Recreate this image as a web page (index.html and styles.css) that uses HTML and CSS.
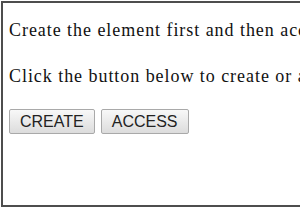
FILE: index.html
```html
<!DOCTYPE html>
<html lang="en">
<head>
    <meta charset="UTF-8">
    <meta name="viewport" content="width=device-width, initial-scale=1.0">
    <title>Create and access</title>
    <link rel="stylesheet" href="styles.css">
</head>
<body>
    <div id="app">
        <p>Create the element first and then access it.</p>
        <p>Click the button below to create or access the element.</p>

        <!-- buttons -->
        <div class="actions">
            <button class="action-button" id="create-button">CREATE</button>
            <button class="action-button" id="access-button">ACCESS</button>
        </div>
    </div>
</body>
</html>
```

FILE: styles.css
```css
html, body {
    margin: 0;
    padding: 0;
    overflow: hidden;
    background-color: #ffffff;
}
#app {
    width: 520px;
    height: 202px;
    margin: 1px 0 0 1px;
    padding: 0 6px;
    border: 2px solid #4d4d4d;
    font-family: "Liberation Serif", "Times New Roman", serif;
    font-size: 18px;
    letter-spacing: 0.95px;
    color: #111;
    white-space: nowrap;
}
p {
    margin: 17px 0 25px 0;
    line-height: 21px;
}
p + p {
    margin: 0 0 22px 0;
}
.actions {
    display: flex;
    gap: 6px;
}
.action-button {
    height: 25px;
    padding: 0 10px;
    font-family: "Liberation Sans", Arial, sans-serif;
    font-size: 16px;
    letter-spacing: 0;
    color: #222;
    background: linear-gradient(#f8f8f8, #dcdcdc);
    border: 1px solid #a9a9a9;
    border-radius: 2px;
    cursor: pointer;
}
```
